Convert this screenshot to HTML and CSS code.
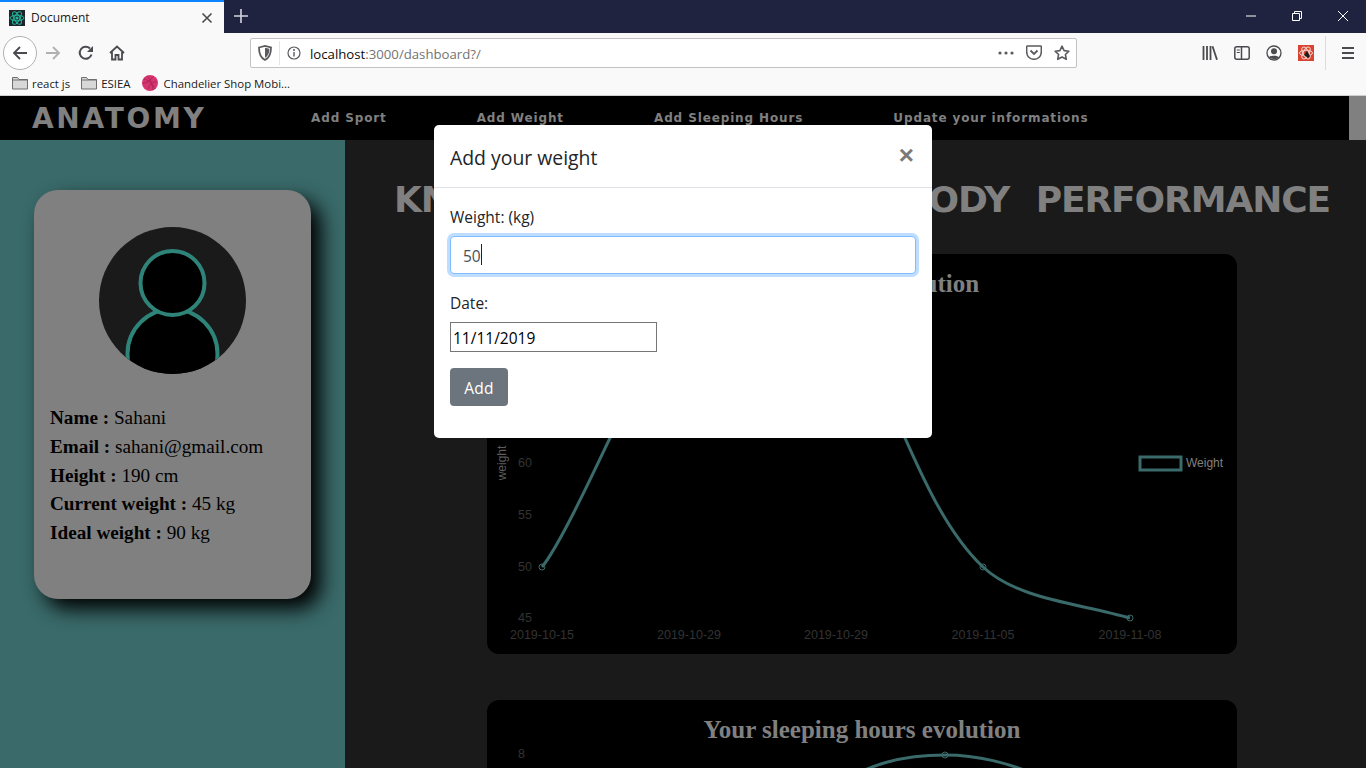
FILE: index.html
```html
<!DOCTYPE html>
<html>
<head>
    <meta name="viewport" content="width=device-width, initial-scale=1.0">
    <title>Document</title>
    <link rel="stylesheet" href="styles.css">
</head>
<body>
    <!-- browser chrome -->
    <div class="tabbar">
        <div class="tab">
            <svg class="tab-icon" width="16" height="16" viewBox="0 0 16 16">
                <rect width="16" height="16" fill="#20232a"/>
                <g fill="none" stroke="#1fb89a" stroke-width="1">
                    <ellipse cx="8" cy="8" rx="7" ry="2.8"/>
                    <ellipse cx="8" cy="8" rx="7" ry="2.8" transform="rotate(60 8 8)"/>
                    <ellipse cx="8" cy="8" rx="7" ry="2.8" transform="rotate(120 8 8)"/>
                </g>
                <circle cx="8" cy="8" r="1.6" fill="#1fb89a"/>
            </svg>
            <span class="tab-title">Document</span>
            <svg class="tab-close" width="12" height="12" viewBox="0 0 12 12"><path d="M1.5 1.5l9 9M10.5 1.5l-9 9" stroke="#4a4a4f" stroke-width="1.6"/></svg>
        </div>
        <svg class="new-tab" width="14" height="14" viewBox="0 0 14 14"><path d="M7 0v14M0 7h14" stroke="#d4d5dc" stroke-width="1.6"/></svg>
        <div class="window-buttons">
            <svg width="12" height="12" viewBox="0 0 12 12"><path d="M1 6h10" stroke="#fff" stroke-width="1"/></svg>
            <svg width="12" height="12" viewBox="0 0 12 12"><path d="M3.5 3V1.5h7v7H9M1.5 3.5h7v7h-7z" fill="none" stroke="#fff" stroke-width="1"/></svg>
            <svg width="12" height="12" viewBox="0 0 12 12"><path d="M1 1l10 10M11 1L1 11" stroke="#fff" stroke-width="1"/></svg>
        </div>
    </div>

    <div class="toolbar">
        <div class="back-button">
            <svg width="16" height="16" viewBox="0 0 16 16"><path d="M15 8H2M8 2L2 8l6 6" fill="none" stroke="#4a4a4f" stroke-width="1.8"/></svg>
        </div>
        <svg class="tool-icon forward" width="16" height="16" viewBox="0 0 16 16"><path d="M1 8h13M8 2l6 6-6 6" fill="none" stroke="#b1b1b3" stroke-width="1.8"/></svg>
        <svg class="tool-icon reload" width="16" height="16" viewBox="0 0 16 16"><path d="M13.5 9.5A6 6 0 1 1 12 3.5" fill="none" stroke="#4a4a4f" stroke-width="2"/><path d="M15 1v6H9z" fill="#4a4a4f"/></svg>
        <svg class="tool-icon home" width="16" height="16" viewBox="0 0 16 16"><path d="M1 8l7-6.5L15 8M3 7v7.500h3.500V10h3v4.500H13V7" fill="none" stroke="#4a4a4f" stroke-width="1.8"/></svg>

        <div class="urlbar">
            <svg class="shield" width="14" height="16" viewBox="0 0 14 16"><path d="M1 2.500L7 1l6 1.500c0 6-1 10-6 12.500C2 12.500 1 8.500 1 2.500z" fill="none" stroke="#5b5b5f" stroke-width="1.800"/><path d="M7 2.800l4.300 1c0 4-.8 7-4.300 9z" fill="#5b5b5f"/></svg>
            <span class="url-divider"></span>
            <svg class="info" width="14" height="14" viewBox="0 0 14 14"><circle cx="7" cy="7" r="6" fill="none" stroke="#5b5b5f" stroke-width="1.200"/><path d="M7 6v4.500" stroke="#5b5b5f" stroke-width="1.400"/><circle cx="7" cy="3.900" r="1" fill="#5b5b5f"/></svg>
            <span class="url-text">localhost<span class="url-dim">:3000/dashboard?/</span></span>
            <span class="url-actions">
                <svg width="16" height="4" viewBox="0 0 16 4"><circle cx="2" cy="2" r="1.600" fill="#5b5b5f"/><circle cx="8" cy="2" r="1.600" fill="#5b5b5f"/><circle cx="14" cy="2" r="1.600" fill="#5b5b5f"/></svg>
                <svg width="16" height="15" viewBox="0 0 16 15"><path d="M1.500 1h13a.8.8 0 0 1 .8.8V7a7.300 7.300 0 0 1-14.600 0V1.800a.8.8 0 0 1 .8-.8z" fill="none" stroke="#5b5b5f" stroke-width="1.500"/><path d="M4.500 5.500L8 9l3.500-3.500" fill="none" stroke="#5b5b5f" stroke-width="1.800"/></svg>
                <svg width="16" height="16" viewBox="0 0 16 16"><path d="M8 1.200l2.100 4.400 4.800.6-3.500 3.300.9 4.800L8 12l-4.300 2.300.9-4.800L1.100 6.200l4.800-.6z" fill="none" stroke="#5b5b5f" stroke-width="1.600" stroke-linejoin="round"/></svg>
            </span>
        </div>

        <div class="toolbar-right">
            <svg width="16" height="14" viewBox="0 0 16 14"><path d="M1.500 0v14M5 0v14M8.500 0v14M10.500.3l4.500 13.500" stroke="#4a4a4f" stroke-width="1.800" fill="none"/></svg>
            <svg width="16" height="14" viewBox="0 0 16 14"><rect x=".8" y=".8" width="14.400" height="12.400" rx="2" fill="none" stroke="#4a4a4f" stroke-width="1.500"/><path d="M7.500 1v12" stroke="#4a4a4f" stroke-width="1.500"/><path d="M2.800 4h3M2.800 6.500h3" stroke="#4a4a4f" stroke-width="1.200"/></svg>
            <svg width="16" height="16" viewBox="0 0 16 16"><circle cx="8" cy="8" r="7" fill="none" stroke="#4a4a4f" stroke-width="1.300"/><circle cx="8" cy="6.200" r="3" fill="#4a4a4f"/><path d="M3 12.500c1-2.500 9-2.500 10 0-2 2-8 2-10 0z" fill="#4a4a4f"/></svg>
            <svg width="16" height="16" viewBox="0 0 16 16"><rect width="16" height="16" fill="#d9432f"/><g fill="none" stroke="#f3d6cf" stroke-width="1"><ellipse cx="8" cy="8" rx="6.500" ry="2.800"/><ellipse cx="8" cy="8" rx="6.500" ry="2.800" transform="rotate(60 8 8)"/><ellipse cx="8" cy="8" rx="6.500" ry="2.800" transform="rotate(120 8 8)"/></g><path d="M6 10l3-4 3 5-2 2z" fill="#1d1d1d"/></svg>
            <span class="toolbar-sep"></span>
            <svg width="12" height="12" viewBox="0 0 12 12"><path d="M0 1h12M0 6h12M0 11h12" stroke="#4a4a4f" stroke-width="1.800"/></svg>
        </div>
    </div>

    <div class="bookmarks">
        <span class="bookmark">
            <svg width="16" height="14" viewBox="0 0 16 14"><path d="M.5 13V1.500h5l1.500 2h8.500V13z" fill="#d8d8d8" stroke="#6e6e6e"/><path d="M.5 4h15" stroke="#6e6e6e"/></svg>
            react js
        </span>
        <span class="bookmark">
            <svg width="16" height="14" viewBox="0 0 16 14"><path d="M.5 13V1.500h5l1.500 2h8.500V13z" fill="#d8d8d8" stroke="#6e6e6e"/><path d="M.5 4h15" stroke="#6e6e6e"/></svg>
            ESIEA
        </span>
        <span class="bookmark bookmark-site">
            <svg width="16" height="16" viewBox="0 0 16 16"><circle cx="8" cy="8" r="8" fill="#d7356f"/><path d="M2 4c4 1 9 5 11 10M11 1.500C9 5 5 8 .5 8.500M5 1c3 3 5 6 6 14M15 7c-3-.5-6 0-9 7" fill="none" stroke="#9c1f4d" stroke-width=".7"/></svg>
            Chandelier Shop Mobi...
        </span>
    </div>

    <!-- the app -->
    <div class="page">
        <nav class="topnav">
            <div class="brand">ANATOMY</div>
            <a class="nav-link nav-gap">Add Sport</a>
            <a class="nav-link nav-gap">Add Weight</a>
            <a class="nav-link nav-gap">Add Sleeping Hours</a>
            <a class="nav-link">Update your informations</a>
            <div class="scroll-thumb"></div>
        </nav>

        <div class="content">
            <aside class="sidebar">
                <div class="profile-card">
                    <svg class="avatar" width="147" height="147" viewBox="0 0 147 147">
                        <defs><clipPath id="avatar-clip"><circle cx="73.500" cy="73.500" r="73.500"/></clipPath></defs>
                        <g clip-path="url(#avatar-clip)">
                            <rect width="147" height="147" fill="#1a1a1a"/>
                            <circle cx="73.500" cy="127" r="45" fill="#000" stroke="#2e8478" stroke-width="4"/>
                            <circle cx="73.500" cy="56" r="32" fill="#000" stroke="#2e8478" stroke-width="4"/>
                        </g>
                    </svg>
                    <div class="profile-info">
                        <p><b>Name :</b> Sahani</p>
                        <p><b>Email :</b> sahani@gmail.com</p>
                        <p><b>Height :</b> 190 cm</p>
                        <p><b>Current weight :</b> 45 kg</p>
                        <p><b>Ideal weight :</b> 90 kg</p>
                    </div>
                </div>
            </aside>

            <main class="main">
                <h1 class="headline"><span>KNOW ABOUT YOUR</span><span>BODY PERFORMANCE</span></h1>

                <section class="chart-card">
                    <h2 class="chart-title">Your weight evolution</h2>
                    <svg class="chart" width="750" height="346" viewBox="0 0 750 346">
                        <text class="axis-name" transform="translate(19 155) rotate(-90)" text-anchor="middle">weight</text>
                        <g class="tick" text-anchor="end">
                            <text x="45" y="159">60</text>
                            <text x="45" y="211">55</text>
                            <text x="45" y="263">50</text>
                            <text x="45" y="314">45</text>
                        </g>
                        <g class="tick" text-anchor="middle">
                            <text x="55" y="331">2019-10-15</text>
                            <text x="202" y="331">2019-10-29</text>
                            <text x="349" y="331">2019-10-29</text>
                            <text x="496" y="331">2019-11-05</text>
                            <text x="643" y="331">2019-11-08</text>
                        </g>
                        <path class="line" d="M55 259C72 238 104 170 123 130C150 80 200 10 270 10C340 10 395 85 418 130C436 170 460 225 496 259C530 291 590 295 643 310"/>
                        <circle class="point" cx="55" cy="259" r="3"/>
                        <circle class="point" cx="496" cy="259" r="3"/>
                        <circle class="point" cx="643" cy="310" r="3"/>
                        <rect class="legend-box" x="653" y="149" width="41" height="13"/>
                        <text class="legend-text" x="699" y="159">Weight</text>
                    </svg>
                </section>

                <section class="chart-card">
                    <h2 class="chart-title">Your sleeping hours evolution</h2>
                    <svg class="chart" width="750" height="346" viewBox="0 0 750 346">
                        <text class="tick" x="31" y="4">8</text>
                        <path class="line" d="M340 38C380 8 420 1 458 1C490 1 520 8 560 25"/>
                        <circle class="point" cx="458" cy="1" r="3"/>
                    </svg>
                </section>
            </main>
        </div>

        <!-- modal sits over the page -->
        <div class="modal">
            <div class="modal-header">
                <h5 class="modal-title">Add your weight</h5>
                <span class="modal-close">&times;</span>
            </div>
            <form class="modal-body">
                <label class="field-label" for="weight">Weight: (kg)</label>
                <div class="weight-wrap">
                    <input class="weight-input" id="weight" type="text" value="50">
                    <span class="caret"></span>
                </div>
                <label class="field-label date-label" for="date">Date:</label>
                <input class="date-input" id="date" type="text" value="11/11/2019">
                <button class="add-button" type="button">Add</button>
            </form>
        </div>
    </div>
</body>
</html>
```

FILE: styles.css
```css
* {
    box-sizing: border-box;
}
html, body {
    margin: 0;
    height: 768px;
    overflow: hidden;
}
body {
    font-family: "Open Sans", "Noto Sans", sans-serif;
    background: #1a1a1a;
    display: flex;
    flex-direction: column;
}

/* browser chrome */
.tabbar {
    height: 33px;
    background: #202340;
    display: flex;
    align-items: center;
    flex-shrink: 0;
}
.tab {
    width: 224px;
    height: 33px;
    background: #f9f9fa;
    border-top: 2px solid #0a84ff;
    display: flex;
    align-items: center;
    padding: 0 11px 0 9px;
    font-size: 12px;
    color: #18191a;
}
.tab-title {
    margin-left: 6px;
    flex: 1;
}
.new-tab {
    margin-left: 10px;
    margin-top: -2px;
}
.window-buttons {
    margin-left: auto;
    display: flex;
    gap: 34px;
    padding-right: 17px;
    margin-top: -1px;
}
.toolbar {
    height: 39px;
    background: #f9f9fa;
    display: flex;
    align-items: center;
    flex-shrink: 0;
    position: relative;
}
.back-button {
    width: 34px;
    height: 34px;
    margin-left: 3px;
    border: 1px solid #b1b1b3;
    border-radius: 50%;
    background: #fff;
    display: flex;
    align-items: center;
    justify-content: center;
}
.tool-icon.forward {
    margin-left: 8px;
}
.tool-icon.reload {
    margin-left: 17px;
}
.tool-icon.home {
    margin-left: 15px;
}
.urlbar {
    width: 827px;
    height: 30px;
    margin-left: 125px;
    background: #fff;
    border: 1px solid #c2c2c4;
    border-radius: 2px;
    display: flex;
    align-items: center;
    padding: 0 6px 0 7px;
    font-size: 13.200px;
    color: #0c0c0d;
}
.url-divider {
    width: 1px;
    height: 24px;
    background: #e4e4e6;
    margin: 0 7px 0 7px;
}
.url-text {
    margin-left: 9px;
    padding-top: 2px;
}
.url-dim {
    color: #737373;
}
.url-actions {
    margin-left: auto;
    display: flex;
    align-items: center;
    gap: 12px;
}
.toolbar-right {
    margin-left: 125px;
    display: flex;
    align-items: center;
    gap: 16px;
}
.toolbar-sep {
    width: 1px;
    height: 34px;
    background: #dcdcde;
    margin: 0 0 0 -5px;
}
.bookmarks {
    height: 24px;
    background: #f9f9fa;
    border-bottom: 1px solid #cfcfd1;
    display: flex;
    align-items: center;
    padding: 0 0 1px 12px;
    gap: 11px;
    font-size: 11.400px;
    color: #18191a;
    flex-shrink: 0;
}
.bookmark {
    display: flex;
    align-items: center;
    gap: 4px;
}
.bookmark-site {
    margin-left: 1px;
    gap: 5px;
}

/* app */
.page {
    flex: 1;
    position: relative;
    display: flex;
    flex-direction: column;
    min-height: 0;
    overflow: hidden;
}
.topnav {
    height: 44px;
    background: #000;
    display: flex;
    align-items: center;
    padding-left: 32px;
    position: relative;
    flex-shrink: 0;
}
.brand {
    font-family: "DejaVu Sans", sans-serif;
    font-weight: 700;
    font-size: 28px;
    letter-spacing: 2.700px;
    color: #808080;
    width: 279px;
}
.nav-link {
    font-family: "DejaVu Sans", sans-serif;
    font-weight: 700;
    font-size: 12px;
    letter-spacing: .875px;
    color: #808080;
}
.nav-gap {
    margin-right: 90px;
}
.scroll-thumb {
    position: absolute;
    right: 0;
    top: 0;
    width: 17px;
    height: 44px;
    background: #808080;
}
.content {
    flex: 1;
    display: flex;
    min-height: 0;
}
.sidebar {
    width: 345px;
    background: #3a6a6a;
    padding: 50px 34px 0;
    flex-shrink: 0;
}
.profile-card {
    width: 277px;
    height: 409px;
    background: #808080;
    border-radius: 24px;
    box-shadow: 10px 10px 20px #000;
    padding: 37px 16px 0;
}
.avatar {
    display: block;
    margin: 0 auto;
}
.profile-info {
    margin-top: 30px;
    font-family: "Liberation Serif", serif;
    font-size: 19.200px;
    color: #000;
}
.profile-info p {
    margin: 0;
    height: 28.800px;
    line-height: 28.800px;
}
.main {
    flex: 1;
    padding: 43px 0 0 49px;
    min-width: 0;
}
.headline {
    margin: 0 0 37px;
    width: 936px;
    height: 34px;
    line-height: 34px;
    font-family: "DejaVu Sans", sans-serif;
    font-weight: 700;
    font-size: 36px;
    letter-spacing: -1.100px;
    word-spacing: 15px;
    color: #808080;
    white-space: nowrap;
    display: flex;
    justify-content: space-between;
}
.chart-card {
    width: 750px;
    height: 400px;
    margin: 0 0 46px 93px;
    background: #000;
    border-radius: 12px;
    overflow: hidden;
}
.chart-title {
    margin: 0;
    height: 54px;
    padding-top: 15px;
    line-height: 30px;
    font-family: "Liberation Serif", serif;
    font-weight: 700;
    font-size: 25px;
    color: #808080;
    text-align: center;
}
.chart {
    display: block;
    overflow: visible;
}
.tick text, text.tick {
    font-family: "Liberation Sans", sans-serif;
    font-size: 12.500px;
    fill: #333;
}
.axis-name {
    font-family: "Liberation Sans", sans-serif;
    font-size: 12px;
    fill: #5e5e5e;
}
.line {
    fill: none;
    stroke: #3a6a6a;
    stroke-width: 3;
}
.point {
    fill: none;
    stroke: #3a6a6a;
    stroke-width: 1;
}
.legend-box {
    fill: #000;
    stroke: #3a6a6a;
    stroke-width: 3;
}
.legend-text {
    font-family: "Liberation Sans", sans-serif;
    font-size: 12px;
    fill: #808080;
}

/* modal */
.modal {
    position: absolute;
    left: 434px;
    top: 29px;
    width: 498px;
    height: 313px;
    background: #fff;
    border-radius: 5px;
    color: #212529;
}
.modal-header {
    height: 63px;
    padding: 2px 16px 0;
    border-bottom: 1px solid #dee2e6;
    display: flex;
    align-items: center;
    justify-content: space-between;
}
.modal-title {
    margin: 0;
    font-size: 19.400px;
    font-weight: 400;
}
.modal-close {
    font-family: "Liberation Sans", sans-serif;
    font-size: 26px;
    font-weight: 700;
    color: #7a7a7a;
    margin: -3px 2px 0 0;
}
.modal-body {
    padding: 17px 16px 0;
    display: flex;
    flex-direction: column;
    align-items: flex-start;
}
.field-label {
    font-size: 15.500px;
    line-height: 24px;
    height: 24px;
}
.date-label {
    margin-top: 17px;
}
.weight-wrap {
    position: relative;
    margin-top: 7px;
    width: 466px;
    height: 38px;
}
.weight-input {
    width: 100%;
    height: 100%;
    padding: 2px 12px 0;
    font-family: inherit;
    font-size: 15.500px;
    color: #495057;
    background: #fff;
    border: 1px solid #80bdff;
    border-radius: 4px;
    box-shadow: 0 0 0 3px #bfdeff;
    outline: 0;
}
.caret {
    position: absolute;
    left: 31px;
    top: 8px;
    width: 1px;
    height: 21px;
    background: #222;
}
.date-input {
    margin-top: 7px;
    width: 207px;
    height: 30px;
    padding: 3px 2px 1px;
    font-family: inherit;
    font-size: 15.500px;
    color: #000;
    background: #fff;
    border: 1px solid #767676;
    border-radius: 0;
    outline: 0;
}
.add-button {
    margin-top: 16px;
    width: 58px;
    height: 38px;
    padding: 2px 0 0;
    font-family: inherit;
    font-size: 15.500px;
    color: #fff;
    background: #6c757d;
    border: 0;
    border-radius: 4px;
    letter-spacing: .3px;
}
```
